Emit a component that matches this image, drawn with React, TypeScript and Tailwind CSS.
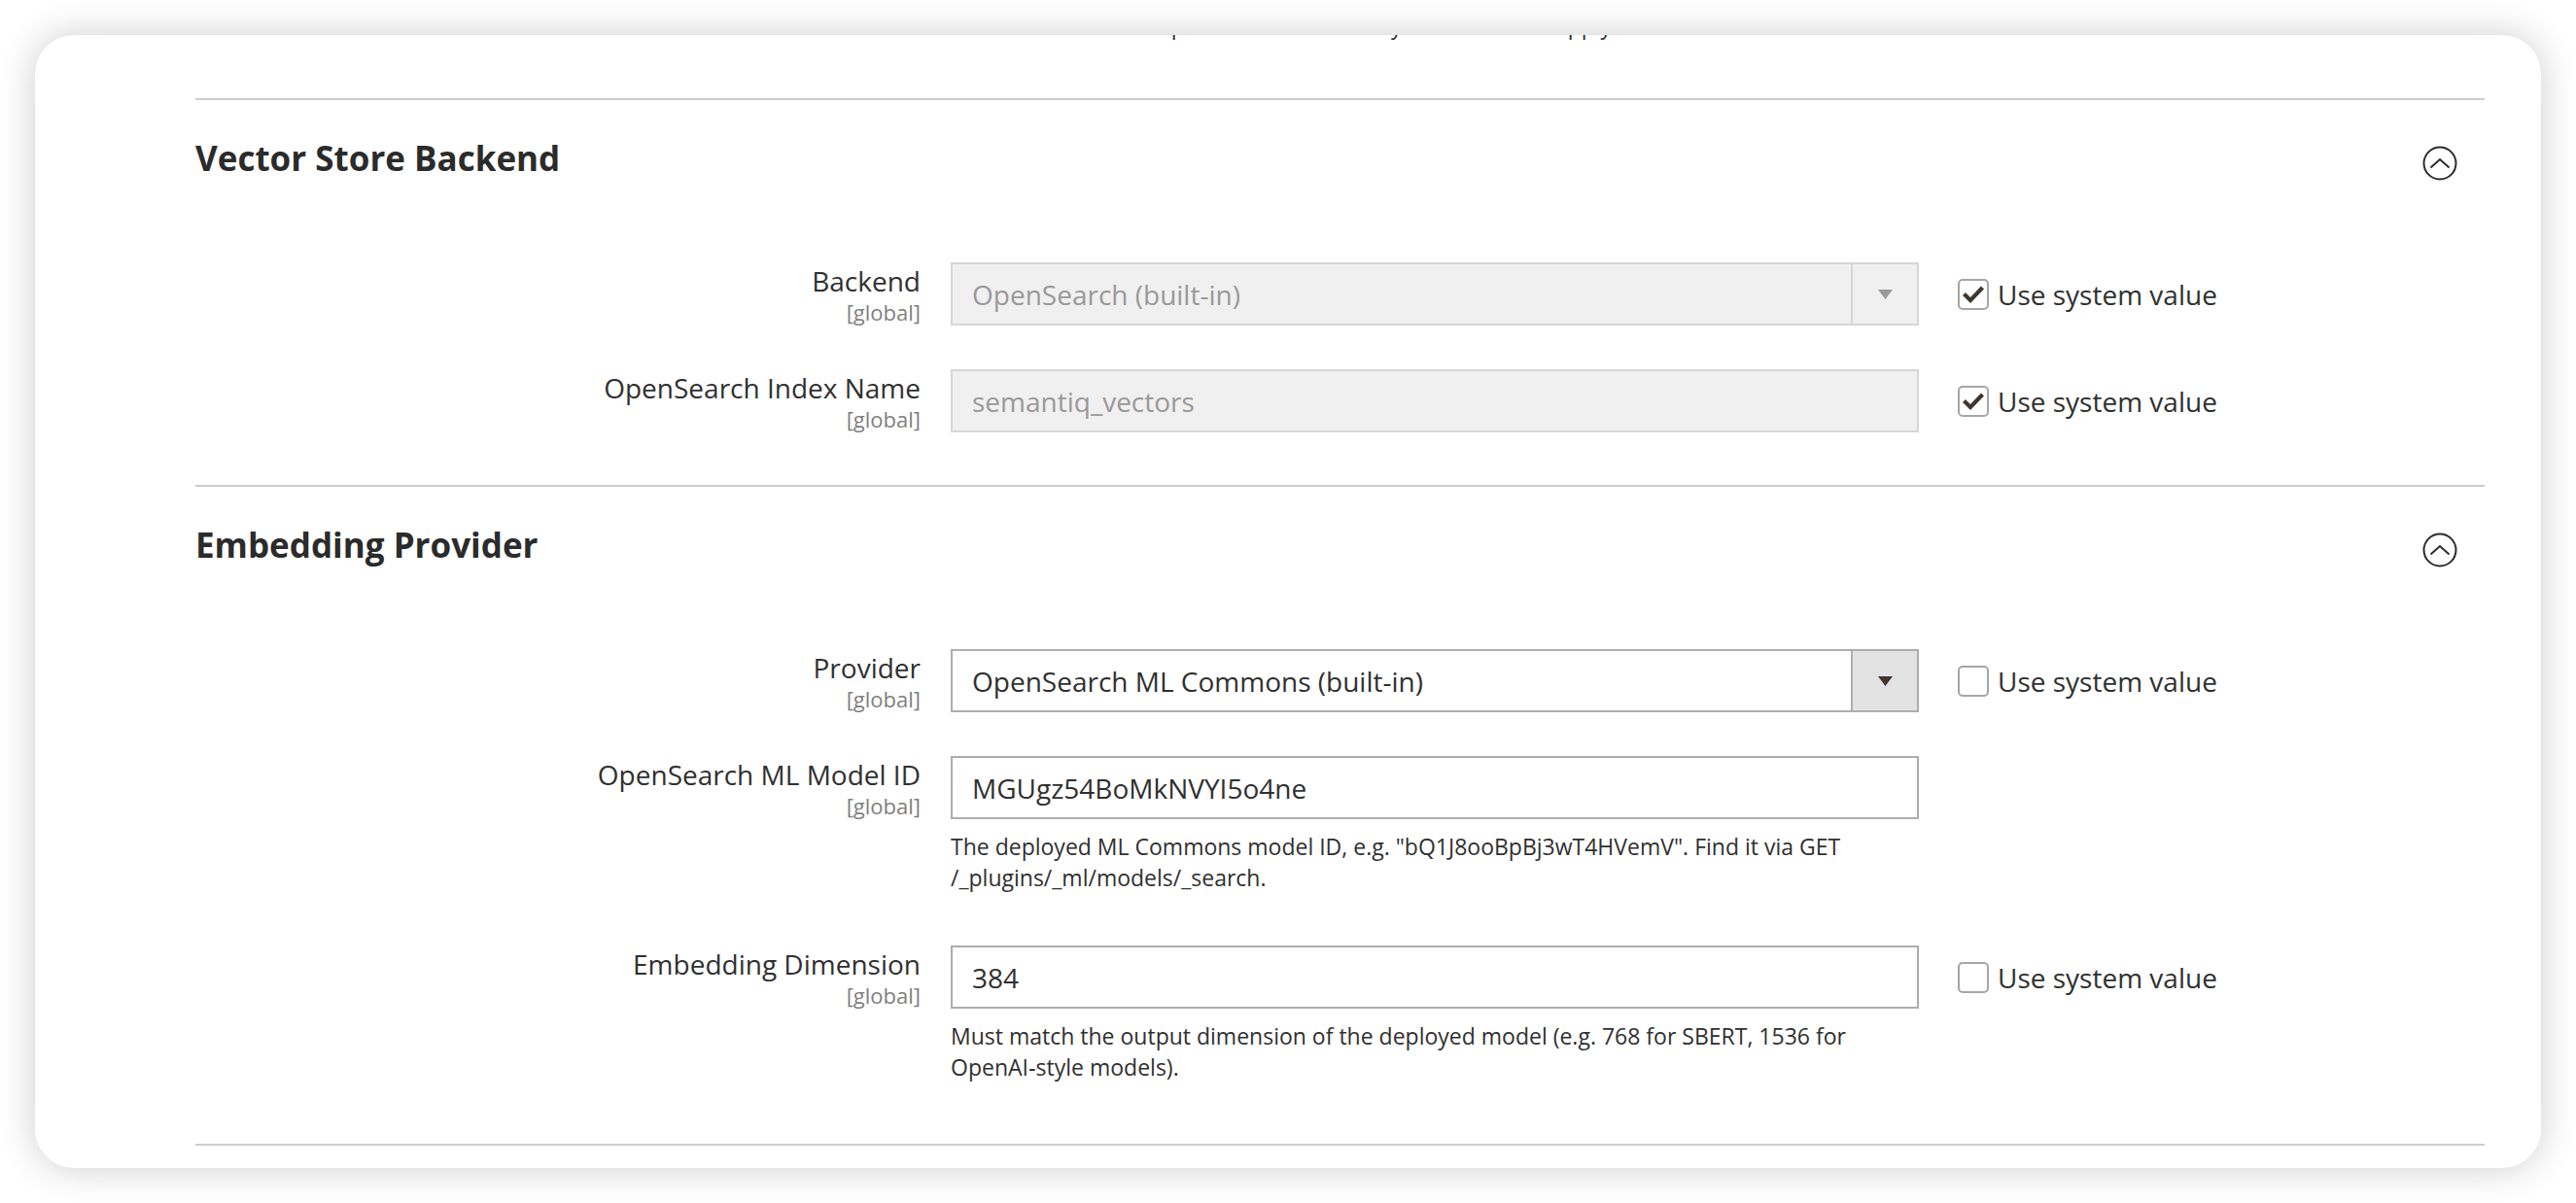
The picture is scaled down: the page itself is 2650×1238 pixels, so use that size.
import type { ReactNode } from "react";

type FieldProps = {
  label: string;
  scope?: string;
  note?: string;
  inherit?: "checked" | "unchecked";
  children: ReactNode;
};

function Caret({ muted }: { muted?: boolean }) {
  return (
    <svg width="15" height="10" viewBox="0 0 15 10">
      <path d="M0 0h15L7.5 10z" fill={muted ? "#9a9a9a" : "#41362f"} />
    </svg>
  );
}

function Select({ value, disabled }: { value: string; disabled?: boolean }) {
  if (disabled) {
    return (
      <div className="flex h-[65px] w-[996px] border-2 border-[#d6d6d6] bg-[#f0f0f0]">
        <div className="flex flex-1 items-center px-[20px] text-[28px] text-[#999999]">{value}</div>
        <div className="flex w-[68px] items-center justify-center border-l-2 border-[#d6d6d6]">
          <Caret muted />
        </div>
      </div>
    );
  }
  return (
    <div className="flex h-[65px] w-[996px] border-2 border-[#adadad] bg-white">
      <div className="flex flex-1 items-center px-[20px] text-[28px] text-[#303030]">{value}</div>
      <div className="flex w-[68px] items-center justify-center border-l-2 border-[#adadad] bg-[#e3e3e3]">
        <Caret />
      </div>
    </div>
  );
}

function TextInput({ value, disabled }: { value: string; disabled?: boolean }) {
  return (
    <div
      className={
        disabled
          ? "flex h-[65px] w-[996px] items-center border-2 border-[#d6d6d6] bg-[#f0f0f0] px-[20px] text-[28px] text-[#999999]"
          : "flex h-[65px] w-[996px] items-center border-2 border-[#adadad] bg-white px-[20px] text-[28px] text-[#303030]"
      }
    >
      {value}
    </div>
  );
}

function Checkbox({ checked }: { checked: boolean }) {
  return (
    <div className="flex h-[32px] w-[32px] items-center justify-center rounded-[5px] border-2 border-[#a6a6a6] bg-white">
      {checked && (
        <svg width="28" height="28" viewBox="0 0 28 28">
          <path d="M4.5 13.5l6.5 6.5L23.5 7" fill="none" stroke="#41362f" strokeWidth="4.2" />
        </svg>
      )}
    </div>
  );
}

function Field({ label, scope = "[global]", note, inherit, children }: FieldProps) {
  return (
    <div className="mb-[45px] flex items-start">
      <div className="w-[746px] text-right">
        <div className="text-[28px] leading-[38px] text-[#303030]">{label}</div>
        <div className="text-[22px] leading-[26px] text-[#808080]">{scope}</div>
      </div>
      <div className="ml-[31px] w-[996px]">
        {children}
        {note && (
          <p className="mt-[12px] mb-[9px] text-[23px] leading-[32px] text-[#303030]">{note}</p>
        )}
      </div>
      {inherit && (
        <label className="ml-[40px] flex h-[65px] items-center">
          <Checkbox checked={inherit === "checked"} />
          <span className="ml-[9px] text-[28px] text-[#303030]">Use system value</span>
        </label>
      )}
    </div>
  );
}

function CollapseIcon() {
  return (
    <svg width="36" height="36" viewBox="0 0 36 36" className="mt-[9px] mr-[28px]">
      <circle cx="18" cy="18" r="16.5" fill="none" stroke="#2b2b2b" strokeWidth="2" />
      <path d="M8.5 22.5L18 14l9.5 8.5" fill="none" stroke="#2b2b2b" strokeWidth="2" />
    </svg>
  );
}

function Section({ title, children }: { title: string; children: ReactNode }) {
  return (
    <section>
      <div className="h-[2px] bg-[#cccccc]" />
      <div className="flex items-start justify-between pt-[38px]">
        <h2 className="text-[35px] leading-[44px] font-bold text-[#2b2b2b]">{title}</h2>
        <CollapseIcon />
      </div>
      <div className="pt-[84px] pb-[9px]">{children}</div>
    </section>
  );
}

export default function App() {
  return (
    <div className="min-h-screen bg-white p-[36px] font-['Open_Sans',sans-serif]">
      <div className="h-[1166px] overflow-hidden rounded-[40px] bg-white pr-[58px] pl-[165px] shadow-[0_0_38px_rgba(0,0,0,0.2)]">
        {/* tail of the previous group's note, scrolled mostly out of view */}
        <p className="-mt-[26px] ml-[777px] text-[23px] leading-[32px] whitespace-nowrap text-[#303030]">
          Stored vectors are kept in the index so they are rebuilt on apply.
        </p>

        <div className="mt-[59px]">
          <Section title="Vector Store Backend">
            <Field label="Backend" inherit="checked">
              <Select value="OpenSearch (built-in)" disabled />
            </Field>
            <Field label="OpenSearch Index Name" inherit="checked">
              <TextInput value="semantiq_vectors" disabled />
            </Field>
          </Section>

          <Section title="Embedding Provider">
            <Field label="Provider" inherit="unchecked">
              <Select value="OpenSearch ML Commons (built-in)" />
            </Field>
            <Field
              label="OpenSearch ML Model ID"
              note={'The deployed ML Commons model ID, e.g. "bQ1J8ooBpBj3wT4HVemV". Find it via GET /_plugins/_ml/models/_search.'}
            >
              <TextInput value="MGUgz54BoMkNVYI5o4ne" />
            </Field>
            <Field
              label="Embedding Dimension"
              inherit="unchecked"
              note="Must match the output dimension of the deployed model (e.g. 768 for SBERT, 1536 for OpenAI&#8209;style models)."
            >
              <TextInput value="384" />
            </Field>
          </Section>

          <div className="h-[2px] bg-[#cccccc]" />
        </div>
      </div>
    </div>
  );
}
